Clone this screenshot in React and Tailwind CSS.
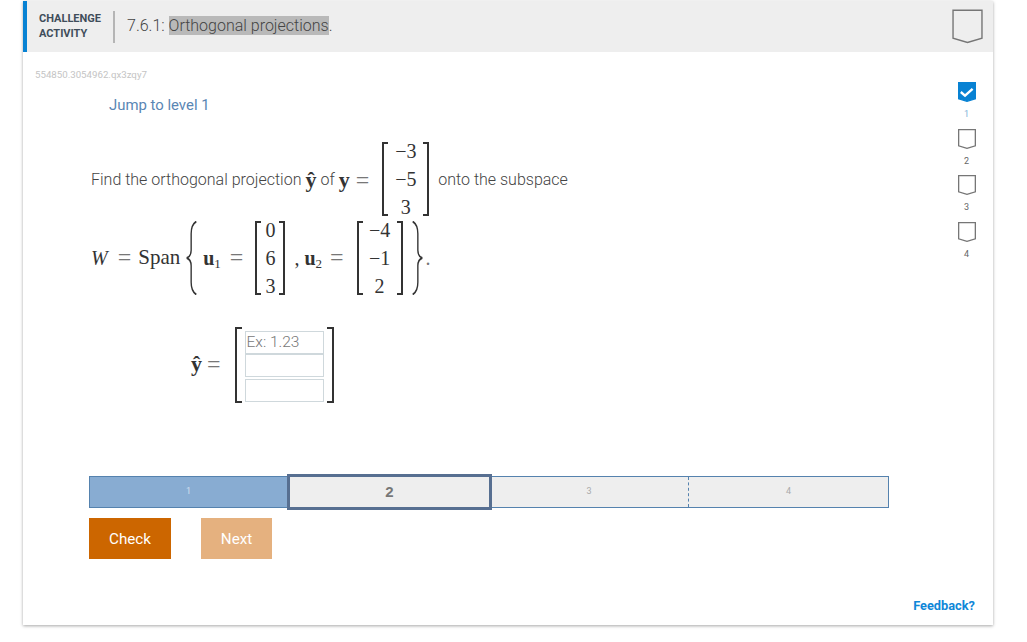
const ROBOTO = "font-['Roboto',sans-serif]";
const PROSE = "font-['Roboto',sans-serif] font-light text-[16px] text-[#444] pb-[3px]";

// ================= SMALL COMPONENTS =================
const Shield = ({ className, done }) => (
  <svg viewBox="0 0 18 20" className={className}>
    <path
      d="M0.6 0.6H17.4V16.8L9 19.3L0.6 16.8Z"
      fill={done ? "#0882d3" : "none"}
      stroke={done ? "#0882d3" : "#767676"}
      strokeWidth="1.4"
      vectorEffect="non-scaling-stroke"
    />
    {done && (
      <path
        d="M2.8 10L7 13.6L14.6 6.8"
        fill="none"
        stroke="#fff"
        strokeWidth="2.4"
      />
    )}
  </svg>
);

const Matrix = ({ rows, width, className = "" }) => (
  <span className={`relative inline-flex h-[74px] ${width} flex-col justify-center items-center ${className}`}>
    <span className="absolute left-0 top-0 bottom-0 w-[6px] border-l-2 border-y-2 border-[#333]" />
    <span className="absolute right-0 top-0 bottom-0 w-[6px] border-r-2 border-y-2 border-[#333]" />
    {rows.map((r, i) => (
      <span key={i} className="block shrink-0 text-[20px] leading-[28px] text-[#333]">{r}</span>
    ))}
  </span>
);

const Brace = ({ flip }) => (
  <svg
    viewBox="0 0 16 76"
    preserveAspectRatio="none"
    className={`w-[11px] h-[74px] ${flip ? "-scale-x-100" : ""}`}
  >
    <path
      d="M15 0.5C9 3 7.5 7 7.5 13V30C7.5 34 5 37 1 38C5 39 7.5 42 7.5 46V63C7.5 69 9 73 15 75.5"
      fill="none"
      stroke="#333"
      strokeWidth="2"
    />
  </svg>
);

const Equals = ({ className }) => (
  <span className={`text-[24px] leading-none -mt-[2px] text-[#777] ${className}`}>=</span>
);

const Segment = ({ label, className }) => (
  <div className={`h-full flex items-center justify-center text-[9px] ${className}`}>{label}</div>
);

export default function App() {
  return (
    <div className={`w-[1027px] h-[642px] bg-white pt-px pl-[23px] overflow-hidden ${ROBOTO}`}>
      <div className="w-[970px] h-[624px] bg-white flex flex-col shadow-[0_1px_3px_rgba(0,0,0,0.35)]">

        {/* ================= HEADER ================= */}
        <div className="h-[51px] shrink-0 bg-[#eeeeee] border-l-4 border-[#0882d3] flex items-center pl-3 pr-[10px]">
          <div className="w-[74px] -mt-[2px] text-[11px] leading-[15px] font-bold text-[#3f4d5a]">
            CHALLENGE<br />ACTIVITY
          </div>
          <div className="w-0.5 h-[32px] bg-[#b5b5b5]" />
          <div className="ml-3 -mt-[2px] text-[16px] font-light text-[#444]">
            7.6.1: <span className="bg-[#b9b9b9]">Orthogonal projections</span>.
          </div>
          <Shield className="ml-auto w-[31px] h-[37px]" />
        </div>

        {/* ================= BODY ================= */}
        <div className="flex-1 flex relative">
          <div className="w-[920px] pl-3">
            <div className="pt-[17px] text-[9.7px] leading-[11px] text-[#c4c4c4]">554850.3054962.qx3zqy7</div>
            <div className="pl-[74px] pt-[15px] text-[14.9px] leading-[20px] text-[#5a86b4]">Jump to level 1</div>

            {/* question */}
            <div className="pl-14 pt-[28px] font-['Liberation_Serif',serif] text-[20px] text-[#333]">
              <div className="flex items-center h-[76px]">
                <span className={PROSE}>Find the orthogonal projection</span>
                <span className="font-bold text-[22px] ml-1 pb-[3px]">ŷ</span>
                <span className={`${PROSE} ml-1`}>of</span>
                <span className="font-bold text-[22px] ml-1 pb-[3px]">y</span>
                <Equals className="ml-[6px]" />
                <span className="ml-[13px] flex"><Matrix rows={["−3", "−5", "3"]} width="w-[47px]" className="[&>span]:-translate-y-[2px]" /></span>
                <span className={`${PROSE} ml-[9px]`}>onto the subspace</span>
              </div>
              <div className="flex items-center h-[78px]">
                <span className="italic">W</span>
                <Equals className="ml-[10px]" />
                <span className="ml-[7px] text-[21px]">Span</span>
                <span className="ml-[6px] flex"><Brace /></span>
                <span className="ml-[6px] font-bold">u<sub className="text-[13px] font-normal">1</sub></span>
                <Equals className="ml-[9px]" />
                <span className="ml-3 flex"><Matrix rows={["0", "6", "3"]} width="w-[30px]" /></span>
                <span className="ml-[9px]">,</span>
                <span className="ml-[5px] font-bold">u<sub className="text-[13px] font-normal">2</sub></span>
                <Equals className="ml-[8px]" />
                <span className="ml-[13px] flex"><Matrix rows={["−4", "−1", "2"]} width="w-[46px]" /></span>
                <span className="ml-[9px] flex"><Brace flip /></span>
                <span className="ml-[3px] text-[#777]">.</span>
              </div>

              {/* answer */}
              <div className="flex items-center h-[76px] mt-[30px] pl-[100px]">
                <span className="font-bold text-[22px] pb-[3px]">ŷ</span>
                <Equals className="ml-[5px]" />
                <span className="relative ml-[14px] w-[99px] h-[76px] flex flex-col items-center">
                  <span className="absolute left-0 top-0 bottom-0 w-[7px] border-l-2 border-y-2 border-[#333]" />
                  <span className="absolute right-0 top-0 bottom-0 w-[7px] border-r-2 border-y-2 border-[#333]" />
                  <input
                    placeholder="Ex: 1.23"
                    className={`${ROBOTO} font-light w-[79px] h-[23px] mt-[4px] border border-[#cfd8dc] px-px text-[15.5px] placeholder:text-[#777]`}
                  />
                  <input className="w-[79px] h-[23px] border border-[#cfd8dc]" />
                  <input className="w-[79px] h-[23px] mt-[2px] border border-[#cfd8dc]" />
                </span>
              </div>
            </div>

            {/* ================= LEVEL BAR ================= */}
            <div className="ml-[54px] mt-[73px] w-[800px] h-[32px] flex items-stretch border border-[#5582ae] bg-[#eeeeee]">
              <Segment label="1" className="w-[197px] bg-[#88acd2] text-[#cfdeed]" />
              <div className="w-[205px] h-[36px] -my-[3px] border-[3px] border-[#576f91] bg-[#eeeeee] flex items-center justify-center text-[15px] font-bold text-[#777] font-['Liberation_Sans',sans-serif] z-10">2</div>
              <Segment label="3" className="w-[197px] pr-0.5 text-[#aaa] border-r border-dashed border-[#5582ae]" />
              <Segment label="4" className="flex-1 text-[#aaa]" />
            </div>

            {/* ================= BUTTONS ================= */}
            <div className="ml-[54px] mt-[10px] flex gap-[30px]">
              <button className="w-[82px] h-[41px] pt-px bg-[#cc6600] text-white text-[15.2px]">Check</button>
              <button className="w-[71px] h-[41px] pt-px bg-[#e5b17f] text-white text-[15.2px]">Next</button>
            </div>
          </div>

          {/* ================= LEVEL SIDEBAR ================= */}
          <div className="flex-1 flex flex-col items-center pt-[30px] -ml-[3px]">
            {[1, 2, 3, 4].map((n) => (
              <div key={n} className="h-[46.7px] flex flex-col items-center">
                <Shield className="w-[18px] h-[20px]" done={n === 1} />
                <span className={`mt-[7px] text-[9px] leading-[10px] ${n === 1 ? "text-[#7fb4d8]" : "text-[#666]"}`}>{n}</span>
              </div>
            ))}
            <div className="absolute bottom-0 right-0 pr-[18px] pb-[10px] text-[12.8px] font-bold text-[#0f87d8] whitespace-nowrap">
              Feedback?
            </div>
          </div>
        </div>

      </div>
    </div>
  );
}
